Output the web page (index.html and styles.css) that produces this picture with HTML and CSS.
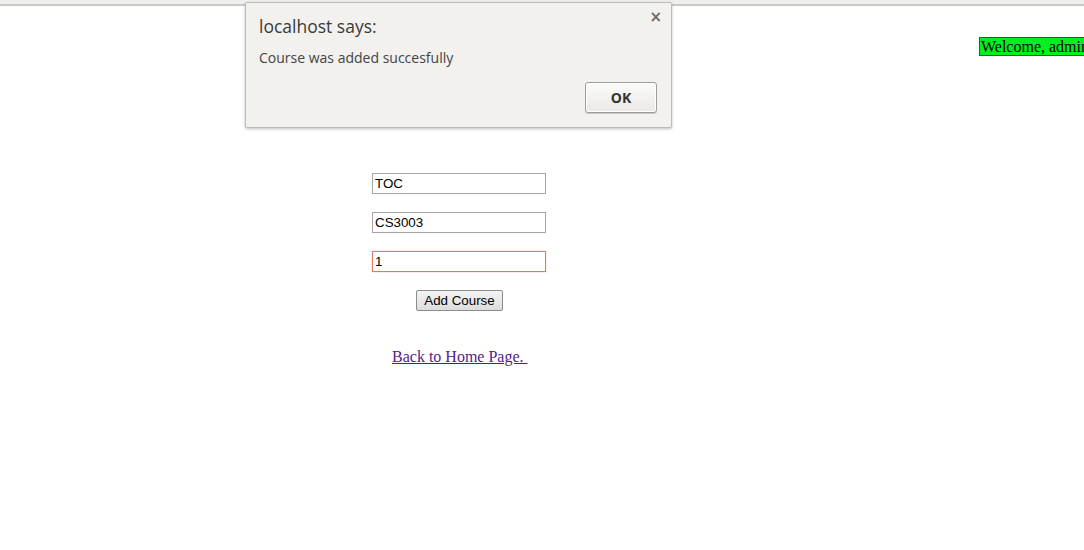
FILE: index.html
```html
<!DOCTYPE html>
<html>
<head>
<meta charset="utf-8">
<title>Add Course</title>
<link rel="stylesheet" href="styles.css">
</head>
<body>
<div class="topbar"></div>
<div class="page">
  <div class="header">
    <span class="welcome">Welcome, admin</span>
  </div>
  <form class="course-form">
    <input class="field" type="text" value="TOC">
    <input class="field" type="text" value="CS3003">
    <input class="field focused" type="text" value="1">
    <button class="submit" type="button">Add Course</button>
  </form>
  <div class="back">
    <a class="back-link" href="#">Back to Home Page. </a>
  </div>
</div>
<div class="dialog">
  <span class="close">&times;</span>
  <div class="dialog-title">localhost says:</div>
  <div class="dialog-msg">Course was added succesfully</div>
  <div class="dialog-actions">
    <button class="ok" type="button">OK</button>
  </div>
</div>
</body>
</html>
```
FILE: styles.css
```css
html, body {
  overflow: hidden;
}
body {
  margin: 0;
  font-family: "Liberation Serif", serif;
  font-size: 16px;
  background: #fff;
  width: 1084px;
  height: 550px;
  position: relative;
}
.topbar {
  height: 4px;
  background: #efefed;
  border-bottom: 2px solid #c9c9c7;
}
.page {
  position: relative;
}
.header {
  display: flex;
  justify-content: flex-start;
  padding-left: 979px;
  padding-top: 31px;
  height: 19px;
  white-space: nowrap;
}
.welcome {
  display: inline-block;
  background: #00f020;
  border: 1px solid #107010;
  line-height: 17px;
  padding: 0 1px;
  color: #000;
  white-space: nowrap;
}
.course-form {
  display: flex;
  flex-direction: column;
  align-items: center;
  width: 174px;
  margin: 117px 0 0 372px;
  gap: 18px;
}
.field {
  box-sizing: border-box;
  width: 174px;
  height: 21px;
  margin: 0;
  padding: 1px 2px;
  border: 1px solid #a5a5a5;
  font-family: "Liberation Sans", Arial, sans-serif;
  font-size: 13.33px;
  color: #000;
  background: #fff;
  outline: none;
}
.field.focused {
  border: 1px solid #e07b53;
  box-shadow: 0 0 1px #e9a080;
}
.submit {
  box-sizing: border-box;
  width: 87px;
  height: 21px;
  margin: 0 0 0 1px;
  padding: 0;
  font-family: "Liberation Sans", Arial, sans-serif;
  font-size: 13.33px;
  color: #000;
  border: 1px solid #8c8c8c;
  border-radius: 2px;
  background: linear-gradient(#f4f4f4, #dcdcdc);
}
.back {
  margin: 37px 0 0 392px;
}
.back-link {
  color: #551a8b;
  text-decoration: underline;
  white-space: pre;
}
.dialog {
  position: absolute;
  left: 245px;
  top: 2px;
  width: 425px;
  height: 124px;
  background: #f2f1ee;
  border: 1px solid #bcbcb8;
  border-radius: 2px;
  box-shadow: 0 1px 3px rgba(0,0,0,0.25);
  font-family: "Open Sans", "DejaVu Sans", sans-serif;
  color: #3c3c3c;
}
.close {
  position: absolute;
  right: 9px;
  top: 5px;
  font-family: "DejaVu Sans", sans-serif;
  font-size: 15px;
  font-weight: bold;
  color: #6a6a6a;
}
.dialog-title {
  margin: 11px 0 0 13px;
  font-size: 17.5px;
  line-height: 24px;
  color: #3a3a3a;
}
.dialog-msg {
  margin: 11px 0 0 13px;
  font-size: 14px;
  line-height: 18px;
  color: #444;
}
.dialog-actions {
  display: flex;
  justify-content: flex-end;
  padding: 15px 14px 0 0;
}
.ok {
  box-sizing: border-box;
  width: 72px;
  height: 31px;
  margin: 0;
  font-family: "Open Sans", "DejaVu Sans", sans-serif;
  font-size: 14px;
  font-weight: bold;
  color: #333;
  border: 1px solid #9d9d9a;
  border-radius: 3px;
  background: linear-gradient(#fbfbfa, #e9e8e5);
  box-shadow: 0 1px 0 #c8c8c4, inset 0 0 0 1px #fff;
}
```
